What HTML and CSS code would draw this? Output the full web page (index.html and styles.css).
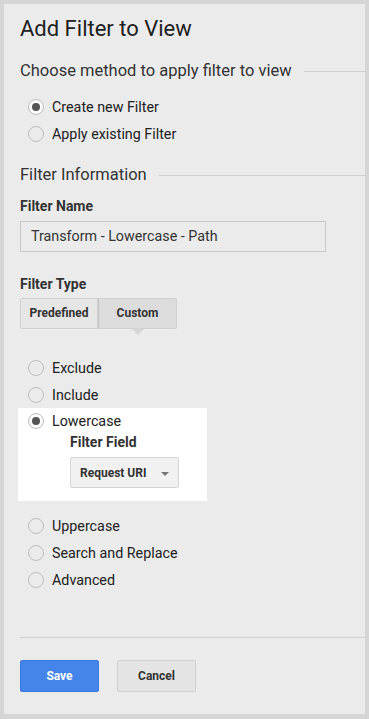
FILE: index.html
```html
<!DOCTYPE html>
<html>
<head>
<meta charset="utf-8">
<link rel="stylesheet" href="styles.css">
</head>
<body>
<div class="panel">
  <h1 class="title">Add Filter to View</h1>
  <div class="section-head head-method"><span>Choose method to apply filter to view</span><span class="rule"></span></div>
  <div class="radios method">
    <div class="radio-row"><span class="radio checked"></span><span>Create new Filter</span></div>
    <div class="radio-row"><span class="radio"></span><span>Apply existing Filter</span></div>
  </div>
  <div class="section-head head-info"><span>Filter Information</span><span class="rule"></span></div>
  <div class="label label-name">Filter Name</div>
  <div class="input">Transform - Lowercase - Path</div>
  <div class="label label-type">Filter Type</div>
  <div class="segmented">
    <div class="seg">Predefined</div>
    <div class="seg active">Custom</div>
  </div>
  <div class="radios types">
    <div class="radio-row"><span class="radio"></span><span>Exclude</span></div>
    <div class="radio-row"><span class="radio"></span><span>Include</span></div>
    <div class="selected-box">
      <div class="radio-row tight"><span class="radio checked"></span><span>Lowercase</span></div>
      <div class="nested">
        <div class="field-label">Filter Field</div>
        <div class="dropdown"><span>Request URI</span><span class="caret"></span></div>
      </div>
    </div>
    <div class="radio-row"><span class="radio"></span><span>Uppercase</span></div>
    <div class="radio-row"><span class="radio"></span><span>Search and Replace</span></div>
    <div class="radio-row"><span class="radio"></span><span>Advanced</span></div>
  </div>
  <div class="divider"></div>
  <div class="actions">
    <button class="btn primary">Save</button>
    <button class="btn">Cancel</button>
  </div>
</div>
</body>
</html>
```
FILE: styles.css
```css
* { box-sizing: border-box; }
html, body { margin: 0; padding: 0; }
body {
  background: #d5d5d5;
  padding: 4px;
  font-family: Roboto, "Liberation Sans", Arial, sans-serif;
  color: #212121;
  width: 369px;
  height: 719px;
}
.panel {
  background: #ebebeb;
  width: 361px;
  height: 710px;
  padding: 13px 0 0 16px;
}
.title {
  margin: 0;
  font-size: 22px;
  font-weight: 400;
  line-height: 24px;
  color: #212121;
}
.section-head {
  display: flex;
  align-items: center;
  font-size: 16.5px;
  line-height: 20px;
  color: #333;
  margin-top: 20px;
}
.section-head .rule {
  flex: 1;
  height: 1px;
  background: #cfcfcf;
  margin-left: 12px;
}
.head-info { margin-top: 18px; }
.radios.method { margin-top: 12px; }
.radio-row {
  display: flex;
  align-items: center;
  height: 27px;
  padding-left: 8px;
  font-size: 14.3px;
  color: #212121;
}
.radio {
  width: 16px;
  height: 16px;
  border: 1px solid #bdbdbd;
  border-radius: 50%;
  margin-right: 8px;
  display: flex;
  align-items: center;
  justify-content: center;
  background: transparent;
  flex: none;
}
.radio.checked { background: #fafafa; }
.radio.checked::after {
  content: "";
  width: 8px;
  height: 8px;
  border-radius: 50%;
  background: #555;
}
.label {
  font-size: 14px;
  font-weight: 700;
  line-height: 16px;
  color: #333;
}
.label-name { margin-top: 13px; }
.input {
  margin-top: 7px;
  width: 306px;
  height: 31px;
  border: 1px solid #c8c8c8;
  background: #ebebeb;
  padding-left: 10px;
  font-size: 14.3px;
  line-height: 29px;
  color: #333;
}
.label-type { margin-top: 24px; }
.segmented {
  margin-top: 6px;
  display: flex;
}
.seg {
  height: 31px;
  font-size: 12px;
  font-weight: 700;
  color: #333;
  line-height: 29px;
  text-align: center;
  border: 1px solid #d0d0d0;
  background: #e6e6e6;
  width: 78px;
  position: relative;
}
.seg:first-child { border-radius: 2px 0 0 2px; }
.seg.active {
  width: 79px;
  background: #dcdcdc;
  border-left: 1px solid #c4c4c4;
  border-radius: 0 2px 2px 0;
}
.seg.active::after {
  content: "";
  position: absolute;
  left: 50%;
  top: 30px;
  margin-left: -6px;
  border-left: 6px solid transparent;
  border-right: 6px solid transparent;
  border-top: 6px solid #d6d6d6;
}
.radios.types { margin-top: 25px; }
.selected-box {
  background: #fff;
  margin-left: -2px;
  width: 189px;
  padding-left: 2px;
  padding-bottom: 13px;
  margin-bottom: 11px;
}
.radio-row.tight { height: 26px; }
.nested { padding-left: 50px; }
.field-label {
  font-size: 14px;
  font-weight: 700;
  line-height: 17px;
  color: #333;
}
.dropdown {
  margin-top: 6px;
  width: 109px;
  height: 31px;
  border: 1px solid #d6d6d6;
  border-radius: 2px;
  background: #f1f1f1;
  display: flex;
  align-items: center;
  padding-left: 9px;
  font-size: 12px;
  font-weight: 700;
  color: #333;
}
.caret {
  margin-left: 15px;
  margin-top: 2px;
  border-left: 4px solid transparent;
  border-right: 4px solid transparent;
  border-top: 4px solid #777;
}
.divider {
  margin-top: 44px;
  height: 1px;
  background: #cfcfcf;
}
.actions {
  margin-top: 22px;
  display: flex;
  gap: 18px;
}
.btn {
  width: 79px;
  height: 32px;
  font-family: Roboto, "Liberation Sans", Arial, sans-serif;
  font-size: 12px;
  font-weight: 700;
  border-radius: 2px;
  border: 1px solid #cfcfcf;
  background: #e4e4e4;
  color: #333;
  padding: 0;
}
.btn.primary {
  background: #4584e8;
  border-color: #3b78e0;
  color: #fff;
}
```
